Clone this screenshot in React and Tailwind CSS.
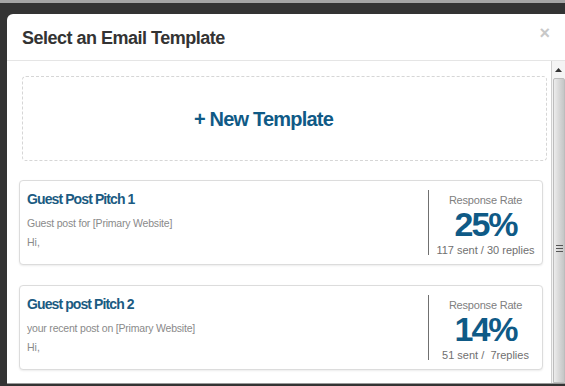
import React from 'react';

const templates = [
  {
    name: 'Guest Post Pitch 1',
    subject: 'Guest post for [Primary Website]',
    rate: '25%',
    stats: '117 sent / 30 replies',
  },
  {
    name: 'Guest post Pitch 2',
    subject: 'your recent post on [Primary Website]',
    rate: '14%',
    stats: '51 sent /  7replies',
  },
];

const TemplateCard = ({ t }) => (
  <div className="flex h-[85px] rounded-[4px] border border-[#dcdcdc] bg-white shadow-[0_1px_2px_rgba(0,0,0,0.08)] mr-[8px]">
    <div className="flex-1 pl-[7px] pt-[10px]">
      <div className="text-[14px] font-bold leading-[17px] tracking-[-0.9px] text-[#1b5b82]">{t.name}</div>
      <div className="mt-[9px] text-[10.5px] leading-[13px] tracking-[-0.2px] text-[#8a8a8a]">{t.subject}</div>
      <div className="mt-[6px] text-[10.5px] leading-[13px] text-[#8a8a8a]">Hi,</div>
    </div>
    <div className="my-[9px] w-[114px] border-l border-[#707070] flex flex-col items-center">
      <div className="mt-[4px] text-[11px] leading-[13px] tracking-[-0.2px] text-[#808080]">Response Rate</div>
      <div className="mt-[3px] text-[34px] font-bold leading-[28px] tracking-[-2px] text-[#0f5a86]">{t.rate}</div>
      <div className="mt-[6px] text-[11px] leading-[13px] whitespace-pre text-[#707070]">{t.stats}</div>
    </div>
  </div>
);

const Scrollbar = () => (
  <div className="w-[14px] shrink-0 border-l border-[#cfcfcf] bg-[#f4f4f4] flex flex-col">
    <div className="h-[17px] shrink-0 flex items-center justify-center">
      <svg width="7" height="4" viewBox="0 0 7 4">
        <path d="M0 4 L3.5 0 L7 4 Z" fill="#333" />
      </svg>
    </div>
    <div className="flex-1 ml-[1px] rounded-t-[2px] border border-[#bdbdbd] bg-gradient-to-r from-[#ececec] via-[#d8d8d8] to-[#c6c6c6] flex items-center justify-center">
      <div className="flex flex-col gap-[2px] mt-[36px]">
        <div className="h-[1px] w-[7px] bg-[#555]" />
        <div className="h-[1px] w-[7px] bg-[#555]" />
        <div className="h-[1px] w-[7px] bg-[#555]" />
      </div>
    </div>
  </div>
);

export default function App() {
  return (
    <div
      className="w-[565px] h-[386px] overflow-hidden bg-[#333333] border-t-[3px] border-[#a4a4a4] pl-[7px] pt-[11px]"
      style={{ fontFamily: '"Liberation Sans", Arial, sans-serif' }}
    >
      <div className="w-[558px] h-[370px] rounded-tl-[6px] bg-white flex flex-col border-b border-[#9a9a9a]">
        <div className="h-[47px] shrink-0 flex items-center justify-between border-b border-[#e5e5e5] pl-[15px] pr-[15px]">
          <div className="text-[18px] font-bold tracking-[-0.5px] text-[#333333] mt-[2px]">Select an Email Template</div>
          <div className="text-[18px] font-bold leading-none text-[#c8c8c8] -mt-[8px]">×</div>
        </div>
        <div className="flex flex-1 min-h-0">
          <div className="flex-1 pl-[12px] pt-[15px] flex flex-col">
            <div className="h-[85px] ml-[3px] mr-[4px] rounded-[4px] border border-dashed border-[#d6d6d6] flex items-center justify-center pr-[42px]">
              <span className="text-[20px] font-bold tracking-[-0.8px] text-[#0f5a86]">+ New Template</span>
            </div>
            <div className="mt-[19px] flex flex-col gap-[20px]">
              {templates.map((t) => (
                <TemplateCard key={t.name} t={t} />
              ))}
            </div>
          </div>
          <Scrollbar />
        </div>
      </div>
    </div>
  );
}
